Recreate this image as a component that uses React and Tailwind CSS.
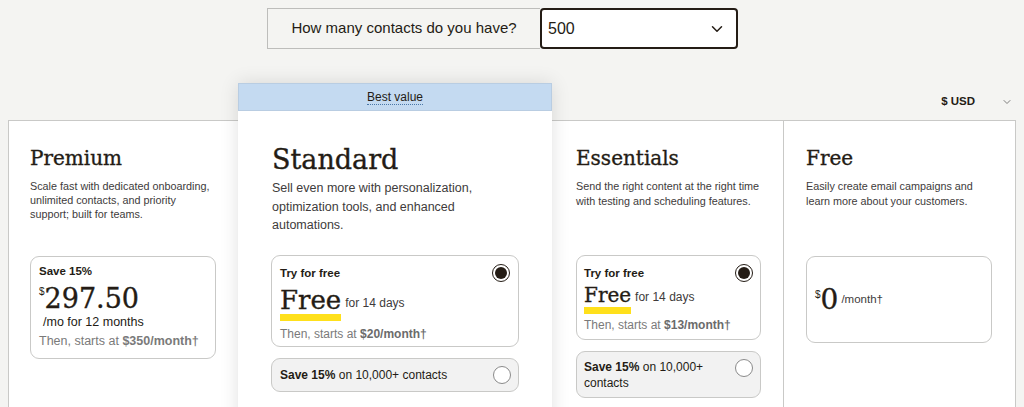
import { ChevronDown } from 'lucide-react';

const serif = "font-['DejaVu_Serif',serif] [-webkit-text-stroke:0.35px_#241c15]";

const Radio = ({ checked }) => (
    <span className={`flex h-[18px] w-[18px] shrink-0 items-center justify-center rounded-full border ${checked ? 'border-[#241c15] bg-white' : 'border-[#8a8a8a] bg-white'}`}>
        {checked && <span className="h-[12px] w-[12px] rounded-full bg-[#241c15]" />}
    </span>
);

const FreeTrial = ({ big, price }) => (
    <div className={`rounded-[9px] border border-[#c9c9c7] bg-white ${big ? 'h-[92px] pl-[8px] pr-[8px] pt-[8px]' : 'h-[85px] pl-[7px] pr-[7px] pt-[8px]'}`}>
        <div className="flex items-center justify-between">
            <span className="text-[11.5px] font-semibold leading-[15px] text-[#241c15]">Try for free</span>
            <Radio checked />
        </div>
        <div className={`flex items-end ${big ? 'mt-[3px]' : 'mt-[1px]'}`}>
            <span className="relative inline-block">
                <span className={`relative z-10 ${serif} ${big ? 'text-[26px] leading-[30px]' : 'text-[20px] leading-[24px]'} text-[#241c15]`}>Free</span>
                <span className="absolute bottom-[-5px] left-0 right-0 h-[7px] bg-[#ffe01b]" />
            </span>
            <span className={`ml-[4px] text-[12px] text-[#403b3b] ${big ? 'mb-[4px]' : 'mb-[3px]'}`}>for 14 days</span>
        </div>
        <div className={`${big ? 'mt-[10px]' : 'mt-[8px]'} text-[12px] leading-[16px] text-[#7a7a7a]`}>
            Then, starts at <span className="font-bold text-[#6b6b6b]">{price}/month†</span>
        </div>
    </div>
);

const App = () => {
    return (
        <div className="h-[407px] overflow-hidden bg-[#f4f4f2] font-['Liberation_Sans',Arial,sans-serif] text-[#241c15]">
            <div className="flex pt-[8px] pl-[267px]">
                <div className="flex h-[41px] w-[273px] items-center justify-center border border-[#bdbdbb] border-r-0 text-[15px] text-[#241c15]">
                    How many contacts do you have?
                </div>
                <div className="flex h-[41px] w-[198px] items-center justify-between rounded-[4px] border-2 border-[#241c15] bg-white pl-[6px] pr-[10px] text-[16px]">
                    <span>500</span>
                    <ChevronDown size={18} strokeWidth={2} className="text-[#241c15]" />
                </div>
            </div>

            <div className="mt-[34px] flex items-start px-[8px]">
                {/* Premium */}
                <div className="mt-[37px] h-[320px] w-[230px] border-l border-t border-[#c9c9c7] bg-white pl-[21px] pr-[22px] pt-[23px]">
                    <h2 className={`${serif} text-[20px] leading-[28px] text-[#241c15]`}>Premium</h2>
                    <p className="mt-[7px] h-[56px] text-[10.8px] leading-[14px] text-[#403b3b]">
                        Scale fast with dedicated onboarding, unlimited contacts, and priority support; built for teams.
                    </p>
                    <div className="mt-[21px] h-[103px] rounded-[9px] border border-[#c9c9c7] pl-[8px] pt-[7px]">
                        <div className="text-[11.5px] font-semibold leading-[14px]">Save 15%</div>
                        <div className="mt-[5px] flex items-start">
                            <span className="mt-[4px] text-[10px] leading-[10px]">$</span>
                            <span className={`${serif} text-[27px] leading-[31px]`}>297.50</span>
                        </div>
                        <div className="pl-[4px] text-[12.5px] leading-[16px] text-[#241c15]">/mo for 12 months</div>
                        <div className="mt-[3px] text-[12.5px] leading-[16px] text-[#7a7a7a]">
                            Then, starts at <span className="font-bold">$350/month†</span>
                        </div>
                    </div>
                </div>

                {/* Standard */}
                <div className="relative z-10 w-[314px] shadow-[0_0_18px_rgba(0,0,0,0.12)]">
                    <div className="flex h-[28px] items-center justify-center border border-[#b9cde2] bg-[#c4daf1] text-[12px] text-[#241c15]">
                        <span className="border-b border-dotted border-[#4a78a8] leading-[14px]">Best value</span>
                    </div>
                    <div className="h-[320px] bg-white pl-[33px] pr-[33px] pt-[32px]">
                        <h2 className={`${serif} pl-[1px] text-[27px] leading-[34px] text-[#241c15]`}>Standard</h2>
                        <p className="mt-[2px] h-[56px] pl-[1px] text-[12.5px] leading-[18.5px] text-[#403b3b]">
                            Sell even more with personalization, optimization tools, and enhanced automations.
                        </p>
                        <div className="mt-[20px]">
                            <FreeTrial big price="$20" />
                        </div>
                        <div className="mt-[11px] flex h-[34px] items-center justify-between rounded-[9px] border border-[#c9c9c7] bg-[#f2f2f2] pl-[8px] pr-[7px]">
                            <span className="text-[12px] text-[#241c15]"><span className="font-semibold">Save 15%</span> on 10,000+ contacts</span>
                            <Radio />
                        </div>
                    </div>
                </div>

                {/* Essentials */}
                <div className="mt-[37px] h-[320px] w-[232px] border-r border-t border-[#c9c9c7] bg-white pl-[24px] pr-[22px] pt-[23px]">
                    <h2 className={`${serif} text-[20px] leading-[28px] text-[#241c15]`}>Essentials</h2>
                    <p className="mt-[7px] h-[56px] text-[10.8px] leading-[14.5px] text-[#403b3b]">
                        Send the right content at the right time with testing and scheduling features.
                    </p>
                    <div className="mt-[20px]">
                        <FreeTrial price="$13" />
                    </div>
                    <div className="mt-[11px] flex h-[47px] items-start justify-between rounded-[9px] border border-[#c9c9c7] bg-[#f2f2f2] pl-[7px] pr-[7px] pt-[7px]">
                        <span className="text-[12px] leading-[16px] text-[#241c15]"><span className="font-semibold">Save 15%</span> on 10,000+<br />contacts</span>
                        <Radio />
                    </div>
                </div>

                {/* Free */}
                <div className="flex w-[232px] flex-col">
                    <div className="flex h-[37px] items-center justify-end pr-[3px] pt-[1px]">
                        <span className="text-[11.5px] font-semibold">$ USD</span>
                        <ChevronDown size={12} strokeWidth={1.75} className="ml-[26px] text-[#6b6b6b]" />
                    </div>
                    <div className="h-[320px] border-r border-t border-[#c9c9c7] bg-white pl-[22px] pr-[23px] pt-[23px]">
                        <h2 className={`${serif} text-[20px] leading-[28px] text-[#241c15]`}>Free</h2>
                        <p className="mt-[7px] h-[56px] text-[10.8px] leading-[14.5px] text-[#403b3b]">
                            Easily create email campaigns and learn more about your customers.
                        </p>
                        <div className="mt-[21px] flex h-[87px] items-center rounded-[9px] border border-[#c9c9c7] pl-[8px]">
                            <span className="-mt-[10px] text-[10px]">$</span>
                            <span className={`${serif} text-[28px] leading-[30px]`}>0</span>
                            <span className="ml-[3px] text-[11.5px] text-[#403b3b]">/month†</span>
                        </div>
                    </div>
                </div>
            </div>
        </div>
    );
};

export default App;
